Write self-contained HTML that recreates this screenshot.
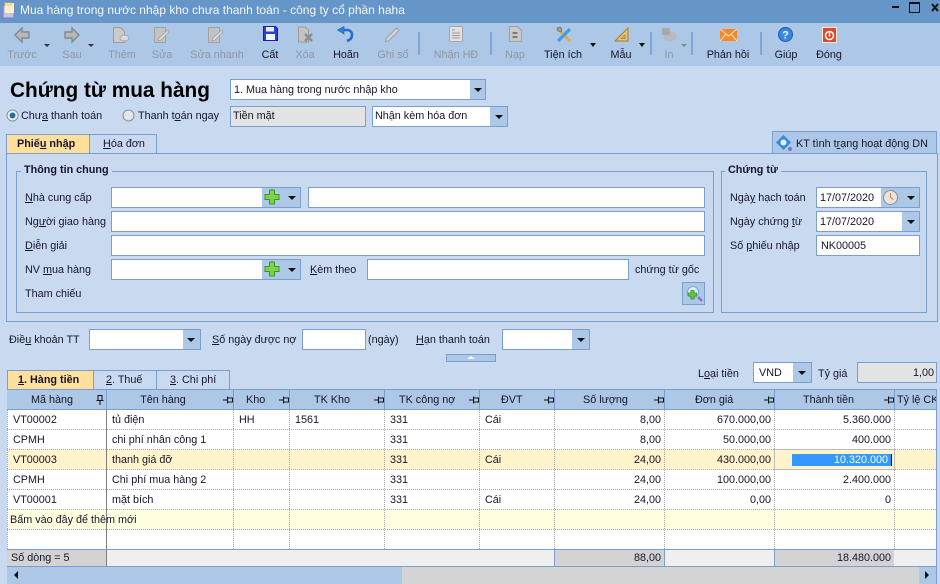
<!DOCTYPE html>
<html><head><meta charset="utf-8">
<style>
html,body{margin:0;padding:0}
body{width:940px;height:584px;overflow:hidden;position:relative;background:#c9daf0;font:10.8px/14px "Liberation Sans","Noto Sans CJK SC",sans-serif;color:#15152a}
div,span.t,svg{position:absolute}
.t{position:absolute;white-space:nowrap}
.c{text-align:center}
.r{text-align:right}
.d{color:#8d97a3}
.b{font-weight:bold}
.i{background:#fff;border:1px solid #7a9fcc;box-sizing:border-box}
.g{background:#adc7e6}
.a{width:0;height:0;border-left:4px solid transparent;border-right:4px solid transparent;border-top:4px solid #111}
.s{width:0;height:0;border-left:3.5px solid transparent;border-right:3.5px solid transparent;border-top:3px solid #333}
.v{top:410px;height:139px;width:0;border-left:1px dotted #a8a8a8}
.h{left:7px;width:929px;height:0;border-top:1px dotted #a8a8a8}
.hv{top:390px;height:20px;width:1px;background:#7a9fcc}
.f{top:550px;height:16px;background:#d3d3d3}
.fl{top:550px;height:16px;width:1px;background:#7a9fcc}
.box{border:1px solid #7a9fcc;box-sizing:border-box}
.lg{background:#c9daf0;padding:0 3px}
</style></head><body>

<div style="left:0;top:0;width:940px;height:23px;background:#6596c7"></div>
<svg style="left:1px;top:1px" width="16" height="20" viewBox="0 0 16 20"><rect x="2" y="4" width="11" height="13" fill="#c6c2ea" stroke="#7c78c0"/><rect x="4" y="2" width="9" height="10" fill="#fdf3c0"/><path d="M4 1v4M7 1v4M10 1v4" stroke="#e8b94c"/></svg>
<span class="t" style="left:20px;top:2px;font-size:12px;line-height:16px;color:#f3f7fc">Mua hàng trong nước nhập kho chưa thanh toán - công ty cổ phần haha</span>
<div style="left:892px;top:6px;width:7px;height:2px;background:#111"></div>
<div style="left:909px;top:2px;width:9px;height:8px;border:1px solid #111;border-top-width:2px"></div>
<svg style="left:931px;top:3px" width="8" height="9" viewBox="0 0 8 9"><path d="M1 1l6 7M7 1L1 8" stroke="#111" stroke-width="2"/></svg>

<div style="left:0;top:23px;width:940px;height:43px;background:#adc7e6"></div>
<!-- toolbar icons -->
<svg style="left:13px;top:26px" width="18" height="18" viewBox="0 0 18 18"><path d="M9 2L2 9l7 7v-4h7V6H9z" fill="#b4b8ba" stroke="#84898c" stroke-width="1.4"/></svg>
<svg style="left:63px;top:26px" width="18" height="18" viewBox="0 0 18 18"><path d="M9 2l7 7-7 7v-4H2V6h7z" fill="#b4b8ba" stroke="#84898c" stroke-width="1.4"/></svg>
<div class="s" style="left:44px;top:44px"></div><div class="s" style="left:88px;top:44px"></div>
<svg style="left:112px;top:26px" width="18" height="18" viewBox="0 0 18 18"><path d="M1.500 1.500h7l4 4v11h-11z" fill="#c8cacb" stroke="#9b9d9f"/><ellipse cx="12.500" cy="12" rx="4.500" ry="3" fill="#d8dadb" stroke="#a5a7a8"/></svg>
<svg style="left:153px;top:26px" width="18" height="18" viewBox="0 0 18 18"><path d="M1.500 1.500h11v15h-11z" fill="#c0c2c3" stroke="#a0a2a3"/><path d="M6 12l9-8 1 2-8 8-3 1z" fill="#dcdddd" stroke="#a0a2a3" stroke-width=".8"/></svg>
<svg style="left:207px;top:26px" width="18" height="18" viewBox="0 0 18 18"><path d="M1.500 1.500h11v15h-11z" fill="#c0c2c3" stroke="#a0a2a3"/><path d="M6 12l9-8 1 2-8 8-3 1z" fill="#dcdddd" stroke="#a0a2a3" stroke-width=".8"/></svg>
<svg style="left:263px;top:26px" width="15" height="15" viewBox="0 0 15 15"><path d="M.5.500h12l2 2v12H.5z" fill="#2c3fd8" stroke="#1520a8"/><rect x="3" y="1" width="8" height="4.500" fill="#e8eefc"/><rect x="3" y="8" width="9" height="6" fill="#f4f6fc"/></svg>
<svg style="left:298px;top:26px" width="16" height="17" viewBox="0 0 16 17"><path d="M.5 1h7l3 3v12H.5z" fill="#c2c3c4" stroke="#9a9b9c"/><path d="M7 8l7 7M14 8l-7 7" stroke="#8b8d8e" stroke-width="2.500"/></svg>
<svg style="left:337px;top:26px" width="17" height="17" viewBox="0 0 17 17"><path d="M6 4h4c3.500 0 5 2.500 5 5 0 3-2 5-5 6" fill="none" stroke="#1f6fcf" stroke-width="2.600"/><path d="M7 .5v7.500L.5 4z" fill="#2b84e2" stroke="#17589f" stroke-width=".6"/></svg>
<svg style="left:384px;top:26px" width="17" height="17" viewBox="0 0 17 17"><path d="M2 12.500L12.500 2l2.500 2.500L4.500 15 1.500 15.500z" fill="#d0d2d3" stroke="#a0a2a3"/></svg>
<div style="left:418px;top:32px;width:2px;height:23px;background:#7fa6d4"></div>
<svg style="left:449px;top:26px" width="15" height="17" viewBox="0 0 15 17"><rect x=".5" y=".5" width="13" height="15" rx="1" fill="#e0e0e0" stroke="#a6a7a8"/><path d="M3 4h3M3 7h8M3 9.500h8M3 12h8" stroke="#9a9a9a"/></svg>
<div style="left:490px;top:32px;width:2px;height:23px;background:#7fa6d4"></div>
<svg style="left:509px;top:26px" width="13" height="17" viewBox="0 0 13 17"><path d="M.5.500h8l4 4v11H.500z" fill="#c8c9ca" stroke="#a0a1a2"/><path d="M3.500 7h5M3.500 11h5" stroke="#6f7173" stroke-width="1.800"/></svg>
<svg style="left:555px;top:26px" width="17" height="17" viewBox="0 0 17 17"><path d="M2 2l13 13" stroke="#e8a84a" stroke-width="3"/><path d="M15 3L3 15" stroke="#3c9fe6" stroke-width="3.200"/><path d="M2 2l3-1 2 2-1 3-3-1z" fill="#9c9c9c" stroke="#666" stroke-width=".6"/></svg>
<div class="a" style="left:590px;top:43px;border-left-width:3.500px;border-right-width:3.500px"></div>
<svg style="left:614px;top:27px" width="15" height="15" viewBox="0 0 15 15"><path d="M14 1v13H1z" fill="#e9c173" stroke="#a87a2e"/><path d="M11 8v3.500H7.500z" fill="#adc7e6" stroke="#a87a2e" stroke-width=".7"/></svg>
<div class="a" style="left:639px;top:43px;border-left-width:3.500px;border-right-width:3.500px"></div>
<div style="left:650px;top:32px;width:2px;height:23px;background:#7fa6d4"></div>
<svg style="left:661px;top:27px" width="16" height="16" viewBox="0 0 16 16"><ellipse cx="9" cy="9.500" rx="6.500" ry="5" fill="#b8babb"/><rect x="1" y="1" width="8" height="7" rx="1.500" fill="#a6a8aa"/></svg>
<div class="s" style="left:681px;top:44px;border-top-color:#7b8792"></div>
<div style="left:691px;top:32px;width:2px;height:23px;background:#7fa6d4"></div>
<svg style="left:720px;top:29px" width="17" height="12" viewBox="0 0 17 12"><rect width="17" height="12" fill="#f58a2c"/><path d="M0 0l8.500 7L17 0M0 12l6-7M17 12l-6-7" fill="none" stroke="#fde6c8"/></svg>
<div style="left:760px;top:32px;width:2px;height:23px;background:#7fa6d4"></div>
<svg style="left:778px;top:27px" width="15" height="15" viewBox="0 0 15 15"><circle cx="7.500" cy="7.500" r="7" fill="#3a86e0" stroke="#1f5aa6"/><text x="7.500" y="11.500" text-anchor="middle" font-family="Liberation Sans" font-weight="bold" font-size="11" fill="#fff">?</text></svg>
<div style="left:822px;top:27px;width:15px;height:16px;background:#dc4a28;border:1px solid #f6e8e0;box-sizing:border-box"></div>
<svg style="left:824px;top:30px" width="11" height="11" viewBox="0 0 11 11"><circle cx="5.500" cy="5.500" r="4" fill="none" stroke="#fff" stroke-width="1.500"/><path d="M5.500 2.500v4" stroke="#fff" stroke-width="1.500"/></svg>

<span class="t c d" style="left:0;top:48px;width:44px">Trước</span>
<span class="t c d" style="left:52px;top:48px;width:40px">Sau</span>
<span class="t c d" style="left:102px;top:48px;width:40px">Thêm</span>
<span class="t c d" style="left:142px;top:48px;width:40px">Sửa</span>
<span class="t c d" style="left:182px;top:48px;width:70px">Sửa nhanh</span>
<span class="t c" style="left:250px;top:48px;width:40px">Cất</span>
<span class="t c d" style="left:285px;top:48px;width:40px">Xóa</span>
<span class="t c" style="left:325px;top:48px;width:42px">Hoãn</span>
<span class="t c d" style="left:372px;top:48px;width:42px">Ghi sổ</span>
<span class="t c d" style="left:426px;top:48px;width:60px">Nhận HĐ</span>
<span class="t c d" style="left:495px;top:48px;width:40px">Nạp</span>
<span class="t c" style="left:533px;top:48px;width:60px">Tiện ích</span>
<span class="t c" style="left:601px;top:48px;width:40px">Mẫu</span>
<span class="t c d" style="left:649px;top:48px;width:40px">In</span>
<span class="t c" style="left:698px;top:48px;width:60px">Phản hồi</span>
<span class="t c" style="left:766px;top:48px;width:40px">Giúp</span>
<span class="t c" style="left:809px;top:48px;width:40px">Đóng</span>

<!-- header form -->
<span class="t b" style="left:10px;top:78px;font-size:20.8px;line-height:26px;color:#000">Chứng từ mua hàng</span>
<div class="i" style="left:230px;top:79px;width:256px;height:21px"></div>
<div class="g" style="left:470px;top:80px;width:15px;height:19px"></div>
<div class="a" style="left:474px;top:88px"></div>
<span class="t" style="left:234px;top:83px">1. Mua hàng trong nước nhập kho</span>

<svg style="left:6px;top:109px" width="13" height="13" viewBox="0 0 13 13"><circle cx="6.500" cy="6.500" r="5.500" fill="#eef2f6" stroke="#8a8f96"/><circle cx="6.500" cy="6.500" r="3" fill="#1e6fa8"/></svg>
<span class="t" style="left:21px;top:109px">Chư<u>a</u> thanh toán</span>
<svg style="left:122px;top:109px" width="13" height="13" viewBox="0 0 13 13"><circle cx="6.500" cy="6.500" r="5.500" fill="#e4e6e8" stroke="#8a8f96"/></svg>
<span class="t" style="left:138px;top:109px">Thanh t<u>o</u>án ngay</span>
<div class="i" style="left:230px;top:106px;width:136px;height:21px;background:#e3e3e3"></div>
<span class="t" style="left:233px;top:109px">Tiền mặt</span>
<div class="i" style="left:372px;top:106px;width:136px;height:21px"></div>
<div class="g" style="left:490px;top:107px;width:17px;height:19px"></div>
<div class="a" style="left:495px;top:115px"></div>
<span class="t" style="left:375px;top:109px">Nhận kèm hóa đơn</span>

<!-- upper tab panel -->
<div class="box" style="left:6px;top:153px;width:932px;height:169px"></div>
<div class="box" style="left:6px;top:134px;width:84px;height:20px;background:#ffdf9c"></div>
<span class="t b" style="left:17px;top:137px">Phiế<u>u</u> nhập</span>
<div class="box" style="left:89px;top:134px;width:68px;height:20px"></div>
<span class="t" style="left:103px;top:137px"><u>H</u>óa đơn</span>
<div class="box" style="left:772px;top:131px;width:165px;height:23px;background:#adc7e6"></div>
<svg style="left:776px;top:135px" width="17" height="17" viewBox="0 0 17 17"><path d="M7.500 0L15 7.500 7.500 15 0 7.500z" fill="#2f8ee0"/><circle cx="7.500" cy="7.500" r="3" fill="#e4f0fb"/><circle cx="14" cy="14" r="2" fill="#8a6fd0"/></svg>
<span class="t" style="left:796px;top:137px">KT tình t<u>r</u>ạng hoạt động DN</span>

<!-- group 1 -->
<div class="box" style="left:16px;top:171px;width:698px;height:142px"></div>
<span class="t b lg" style="left:21px;top:163px">Thông tin chung</span>
<span class="t" style="left:25px;top:191px"><u>N</u>hà cung cấp</span>
<span class="t" style="left:25px;top:215px">Ng<u>ư</u>ời giao hàng</span>
<span class="t" style="left:25px;top:239px"><u>D</u>iễn giải</span>
<span class="t" style="left:25px;top:263px">NV <u>m</u>ua hàng</span>
<span class="t" style="left:25px;top:287px">Tham chiếu</span>

<div class="i" style="left:111px;top:187px;width:190px;height:21px"></div>
<div class="g" style="left:262px;top:188px;width:38px;height:19px"></div>
<svg style="left:264px;top:189px" width="16" height="16" viewBox="0 0 16 16"><path d="M5.500 1h5v4.500H15v5h-4.500V15h-5v-4.500H1v-5h4.500z" fill="#7fd04c" stroke="#3a9a24"/></svg>
<div class="a" style="left:288px;top:196px"></div>
<div class="i" style="left:308px;top:187px;width:397px;height:21px"></div>
<div class="i" style="left:111px;top:211px;width:594px;height:21px"></div>
<div class="i" style="left:111px;top:235px;width:594px;height:21px"></div>
<div class="i" style="left:111px;top:259px;width:190px;height:21px"></div>
<div class="g" style="left:262px;top:260px;width:38px;height:19px"></div>
<svg style="left:264px;top:261px" width="16" height="16" viewBox="0 0 16 16"><path d="M5.500 1h5v4.500H15v5h-4.500V15h-5v-4.500H1v-5h4.500z" fill="#7fd04c" stroke="#3a9a24"/></svg>
<div class="a" style="left:288px;top:268px"></div>
<span class="t" style="left:310px;top:263px"><u>K</u>èm theo</span>
<div class="i" style="left:367px;top:259px;width:262px;height:21px"></div>
<span class="t" style="left:635px;top:263px">chứng từ gốc</span>
<div class="box" style="left:682px;top:282px;width:23px;height:23px;background:#adc7e6"></div>
<svg style="left:685px;top:285px" width="18" height="18" viewBox="0 0 18 18"><circle cx="8" cy="7" r="5.500" fill="#dcecf8" stroke="#7aa8d4"/><path d="M13 12l4 4" stroke="#8a6fd0" stroke-width="2.500"/><path d="M4 6h3V3.500h3V6h2.500v3H10v3H7V9H4z" transform="translate(-1 2)" fill="#6cc840" stroke="#2f8a20" stroke-width=".8"/></svg>

<!-- group 2 -->
<div class="box" style="left:721px;top:171px;width:206px;height:142px"></div>
<span class="t b lg" style="left:725px;top:163px">Chứng từ</span>
<span class="t" style="left:730px;top:191px">Ngà<u>y</u> hạch toán</span>
<span class="t" style="left:730px;top:215px">Ngày chứng <u>t</u>ừ</span>
<span class="t" style="left:730px;top:239px">Số <u>p</u>hiếu nhập</span>
<div class="i" style="left:816px;top:187px;width:104px;height:21px"></div>
<div class="g" style="left:881px;top:188px;width:38px;height:19px"></div>
<svg style="left:882px;top:189px" width="17" height="17" viewBox="0 0 17 17"><circle cx="8.500" cy="8.500" r="7" fill="#e8e4da" stroke="#8b8f94"/><path d="M8.500 4v4.500l3 2" stroke="#d07a60" fill="none"/></svg>
<div class="a" style="left:907px;top:196px"></div>
<span class="t" style="left:820px;top:191px">17/07/2020</span>
<div class="i" style="left:816px;top:211px;width:104px;height:21px"></div>
<div class="g" style="left:902px;top:212px;width:17px;height:19px"></div>
<div class="a" style="left:907px;top:220px"></div>
<span class="t" style="left:820px;top:215px">17/07/2020</span>
<div class="i" style="left:816px;top:235px;width:104px;height:21px"></div>
<span class="t" style="left:821px;top:239px">NK00005</span>

<!-- terms -->
<span class="t" style="left:9px;top:333px">Điề<u>u</u> khoản TT</span>
<div class="i" style="left:89px;top:329px;width:112px;height:21px"></div>
<div class="g" style="left:183px;top:330px;width:17px;height:19px"></div>
<div class="a" style="left:187px;top:338px"></div>
<span class="t" style="left:212px;top:333px"><u>S</u>ố ngày được nợ</span>
<div class="i" style="left:302px;top:329px;width:64px;height:21px"></div>
<span class="t" style="left:368px;top:333px">(ngày)</span>
<span class="t" style="left:416px;top:333px"><u>H</u>ạn thanh toán</span>
<div class="i" style="left:502px;top:329px;width:88px;height:21px"></div>
<div class="g" style="left:572px;top:330px;width:17px;height:19px"></div>
<div class="a" style="left:577px;top:338px"></div>
<div class="box" style="left:446px;top:354px;width:50px;height:8px;background:#adc7e6"></div>
<div style="left:467px;top:356px;width:0;height:0;border-left:4px solid transparent;border-right:4px solid transparent;border-bottom:3px solid #fff"></div>

<!-- lower tabs -->
<div class="box" style="left:7px;top:370px;width:87px;height:20px;background:#ffdf9c"></div>
<span class="t b" style="left:18px;top:373px"><u>1</u>. Hàng tiền</span>
<div class="box" style="left:93px;top:370px;width:64px;height:20px"></div>
<span class="t" style="left:106px;top:373px"><u>2</u>. Thuế</span>
<div class="box" style="left:156px;top:370px;width:74px;height:20px"></div>
<span class="t" style="left:170px;top:373px"><u>3</u>. Chi phí</span>

<span class="t" style="left:698px;top:367px">L<u>o</u>ại tiền</span>
<div class="i" style="left:753px;top:362px;width:59px;height:21px"></div>
<div class="g" style="left:793px;top:363px;width:18px;height:19px"></div>
<div class="a" style="left:798px;top:371px"></div>
<span class="t" style="left:759px;top:366px">VND</span>
<span class="t" style="left:818px;top:367px">Tỷ <u>g</u>iá</span>
<div class="i" style="left:857px;top:362px;width:80px;height:21px;background:#e3e3e3"></div>
<span class="t r" style="left:860px;top:366px;width:74px">1,00</span>

<!-- grid -->
<div style="left:7px;top:389px;width:929px;height:177px;background:#fff"></div>
<div style="left:7px;top:450px;width:929px;height:19px;background:#fff3cb"></div>
<div style="left:7px;top:510px;width:929px;height:19px;background:#ffffdf"></div>
<div style="left:7px;top:389px;width:929px;height:21px;background:#adc7e6;border-top:1px solid #7a9fcc;border-bottom:1px solid #7a9fcc;box-sizing:border-box"></div>
<div class="hv" style="left:106px"></div><div class="hv" style="left:233px"></div><div class="hv" style="left:289px"></div><div class="hv" style="left:384px"></div><div class="hv" style="left:479px"></div><div class="hv" style="left:554px"></div><div class="hv" style="left:664px"></div><div class="hv" style="left:774px"></div><div class="hv" style="left:894px"></div>

<span class="t c" style="left:7px;top:393px;width:90px">Mã hàng</span>
<span class="t c" style="left:107px;top:393px;width:112px">Tên hàng</span>
<span class="t" style="left:246px;top:393px">Kho</span>
<span class="t" style="left:314px;top:393px">TK Kho</span>
<span class="t" style="left:399px;top:393px">TK công nợ</span>
<span class="t" style="left:501px;top:393px">ĐVT</span>
<span class="t" style="left:583px;top:393px">Số lượng</span>
<span class="t" style="left:695px;top:393px">Đơn giá</span>
<span class="t" style="left:803px;top:393px">Thành tiền</span>
<span class="t" style="left:897px;top:393px;width:39px;overflow:hidden">Tỷ lệ CK</span>
<svg style="left:96px;top:395px" width="8" height="10" viewBox="0 0 8 10"><path d="M2 .5h4v5H2zM.5 5.500h7M4 5.500V10" fill="none" stroke="#111"/></svg>
<svg style="left:223px;top:396px" width="10" height="8" viewBox="0 0 10 8"><path d="M4.500 2h5v4h-5zM4.500.5v7M4.500 4H0" fill="none" stroke="#111"/></svg>
<svg style="left:279px;top:396px" width="10" height="8" viewBox="0 0 10 8"><path d="M4.500 2h5v4h-5zM4.500.5v7M4.500 4H0" fill="none" stroke="#111"/></svg>
<svg style="left:374px;top:396px" width="10" height="8" viewBox="0 0 10 8"><path d="M4.500 2h5v4h-5zM4.500.5v7M4.500 4H0" fill="none" stroke="#111"/></svg>
<svg style="left:469px;top:396px" width="10" height="8" viewBox="0 0 10 8"><path d="M4.500 2h5v4h-5zM4.500.5v7M4.500 4H0" fill="none" stroke="#111"/></svg>
<svg style="left:544px;top:396px" width="10" height="8" viewBox="0 0 10 8"><path d="M4.500 2h5v4h-5zM4.500.5v7M4.500 4H0" fill="none" stroke="#111"/></svg>
<svg style="left:654px;top:396px" width="10" height="8" viewBox="0 0 10 8"><path d="M4.500 2h5v4h-5zM4.500.5v7M4.500 4H0" fill="none" stroke="#111"/></svg>
<svg style="left:764px;top:396px" width="10" height="8" viewBox="0 0 10 8"><path d="M4.500 2h5v4h-5zM4.500.5v7M4.500 4H0" fill="none" stroke="#111"/></svg>
<svg style="left:884px;top:396px" width="10" height="8" viewBox="0 0 10 8"><path d="M4.500 2h5v4h-5zM4.500.5v7M4.500 4H0" fill="none" stroke="#111"/></svg>

<div class="v" style="left:7px"></div><div class="v" style="left:233px"></div><div class="v" style="left:289px"></div><div class="v" style="left:384px"></div><div class="v" style="left:479px"></div><div class="v" style="left:554px"></div><div class="v" style="left:664px"></div><div class="v" style="left:774px"></div><div class="v" style="left:894px"></div>
<div class="h" style="top:429px"></div><div class="h" style="top:449px"></div><div class="h" style="top:469px"></div><div class="h" style="top:489px"></div><div class="h" style="top:509px"></div><div class="h" style="top:529px"></div>
<div style="left:106px;top:410px;width:1px;height:156px;background:#808080"></div>

<!-- rows -->
<span class="t" style="left:13px;top:413px">VT00002</span><span class="t" style="left:112px;top:413px">tủ điện</span><span class="t" style="left:239px;top:413px">HH</span><span class="t" style="left:295px;top:413px">1561</span><span class="t" style="left:390px;top:413px">331</span><span class="t" style="left:485px;top:413px">Cái</span><span class="t r" style="left:560px;top:413px;width:101px">8,00</span><span class="t r" style="left:670px;top:413px;width:101px">670.000,00</span><span class="t r" style="left:780px;top:413px;width:111px">5.360.000</span>
<span class="t" style="left:13px;top:433px">CPMH</span><span class="t" style="left:112px;top:433px">chi phí nhân công 1</span><span class="t" style="left:390px;top:433px">331</span><span class="t r" style="left:560px;top:433px;width:101px">8,00</span><span class="t r" style="left:670px;top:433px;width:101px">50.000,00</span><span class="t r" style="left:780px;top:433px;width:111px">400.000</span>
<span class="t" style="left:13px;top:453px">VT00003</span><span class="t" style="left:112px;top:453px">thanh giá đỡ</span><span class="t" style="left:390px;top:453px">331</span><span class="t" style="left:485px;top:453px">Cái</span><span class="t r" style="left:560px;top:453px;width:101px">24,00</span><span class="t r" style="left:670px;top:453px;width:101px">430.000,00</span>
<div style="left:774px;top:449px;width:121px;height:21px;border:1px solid #bbb;box-sizing:border-box"></div>
<div style="left:792px;top:454px;width:99px;height:12px;background:#3399ff"></div>
<div style="left:891px;top:454px;width:1px;height:12px;background:#111"></div>
<span class="t r" style="left:790px;top:453px;width:98px;color:#fff">10.320.000</span>
<span class="t" style="left:13px;top:473px">CPMH</span><span class="t" style="left:112px;top:473px">Chi phí mua hàng 2</span><span class="t" style="left:390px;top:473px">331</span><span class="t r" style="left:560px;top:473px;width:101px">24,00</span><span class="t r" style="left:670px;top:473px;width:101px">100.000,00</span><span class="t r" style="left:780px;top:473px;width:111px">2.400.000</span>
<span class="t" style="left:13px;top:493px">VT00001</span><span class="t" style="left:112px;top:493px">mặt bích</span><span class="t" style="left:390px;top:493px">331</span><span class="t" style="left:485px;top:493px">Cái</span><span class="t r" style="left:560px;top:493px;width:101px">24,00</span><span class="t r" style="left:670px;top:493px;width:101px">0,00</span><span class="t r" style="left:780px;top:493px;width:111px">0</span>
<span class="t" style="left:10px;top:513px">Bấm vào đây để thêm mới</span>

<!-- footer -->
<div style="left:7px;top:549px;width:929px;height:18px;background:#efefef;border-top:1px solid #7a9fcc;border-bottom:1px solid #7a9fcc;box-sizing:border-box"></div>
<div class="f" style="left:7px;width:99px"></div>
<div class="f" style="left:555px;width:109px"></div>
<div class="f" style="left:775px;width:119px"></div>
<div style="left:106px;top:550px;width:1px;height:16px;background:#808080"></div>
<div class="fl" style="left:554px"></div><div class="fl" style="left:664px"></div><div class="fl" style="left:774px"></div>
<span class="t" style="left:11px;top:551px">Số dòng = 5</span>
<span class="t r" style="left:560px;top:551px;width:101px">88,00</span>
<span class="t r" style="left:780px;top:551px;width:111px">18.480.000</span>

<!-- scrollbar -->
<div style="left:7px;top:567px;width:929px;height:17px;background:#d4d4d4"></div>
<div class="g" style="left:7px;top:567px;width:395px;height:17px"></div>
<div class="g" style="left:919px;top:567px;width:17px;height:17px"></div>
<div style="left:14px;top:571px;width:0;height:0;border-top:4px solid transparent;border-bottom:4px solid transparent;border-right:4px solid #111"></div>
<div style="left:925px;top:571px;width:0;height:0;border-top:4px solid transparent;border-bottom:4px solid transparent;border-left:4px solid #111"></div>
<div style="left:936px;top:389px;width:1px;height:195px;background:#7a9fcc"></div>
</body></html>
